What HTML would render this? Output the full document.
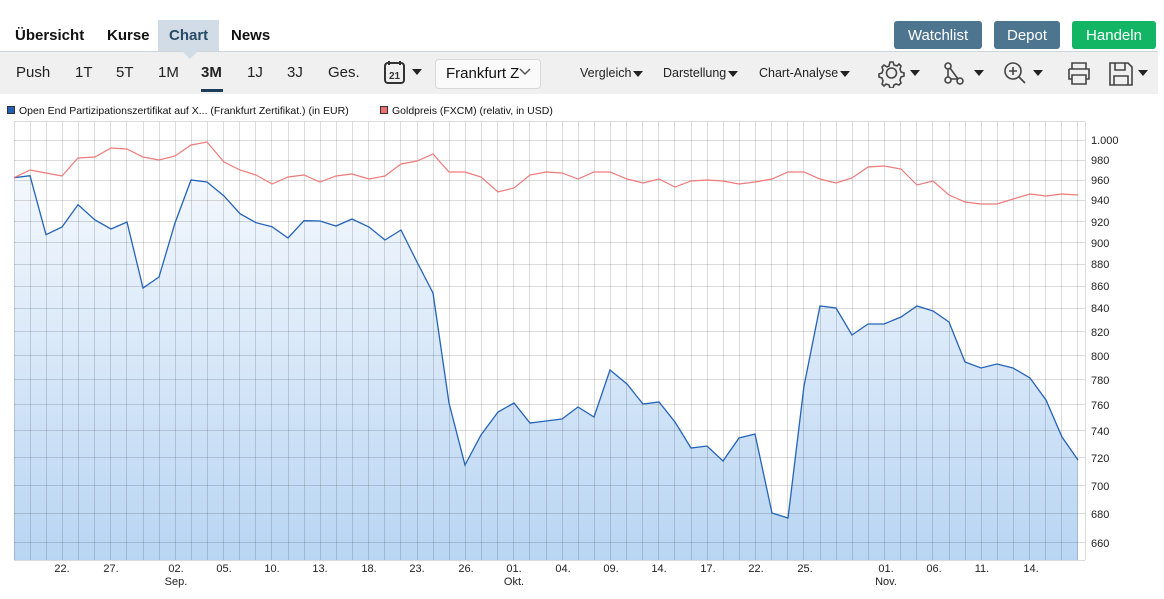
<!DOCTYPE html>
<html><head><meta charset="utf-8"><style>
*{margin:0;padding:0;box-sizing:border-box}
body{width:1164px;height:599px;background:#fff;font-family:"Liberation Sans",sans-serif;position:relative;overflow:hidden;color:#111}
.a{position:absolute;white-space:nowrap}
.tab{font-size:15px;font-weight:bold;top:27px}
.btn{position:absolute;top:21px;height:28px;border-radius:3px;color:#fff;font-size:15px;text-align:center;line-height:29px}
.tb{font-size:15px;top:64px;color:#222}
.sm{font-size:12.5px;top:66px;color:#222}
.tri{display:inline-block;width:0;height:0;border-left:5px solid transparent;border-right:5px solid transparent;border-top:6px solid #222;vertical-align:middle;margin-left:2px}
</style></head><body>
<div class="a" style="left:158px;top:20px;width:61px;height:31px;background:#d2dce6"></div>
<div class="a" style="left:182px;top:51px;width:0;height:0;border-left:8px solid transparent;border-right:8px solid transparent;border-top:8px solid #d2dce6;z-index:2"></div>
<div class="a tab" style="left:15px">Übersicht</div>
<div class="a tab" style="left:107px">Kurse</div>
<div class="a tab" style="left:169px;color:#284b66">Chart</div>
<div class="a tab" style="left:231px">News</div>
<div class="btn" style="left:894px;width:88px;background:#4e7590">Watchlist</div>
<div class="btn" style="left:994px;width:66px;background:#4e7590">Depot</div>
<div class="btn" style="left:1072px;width:84px;background:#11b564">Handeln</div>
<div class="a" style="left:0;top:51px;width:1158px;height:43px;background:#f0f0f0;border-top:1px solid #cdd5dd"></div>
<div class="a tb" style="left:16px">Push</div>
<div class="a tb" style="left:75px">1T</div>
<div class="a tb" style="left:116px">5T</div>
<div class="a tb" style="left:158px">1M</div>
<div class="a tb" style="left:201px;font-weight:bold">3M</div>
<div class="a" style="left:201px;top:89px;width:22px;height:3px;background:#1c3d5a"></div>
<div class="a tb" style="left:247px">1J</div>
<div class="a tb" style="left:287px">3J</div>
<div class="a tb" style="left:328px">Ges.</div>
<svg class="a" style="left:383px;top:60px" width="40" height="26"><rect x="2" y="3" width="19" height="20" rx="3" fill="none" stroke="#333" stroke-width="2"/><line x1="6" y1="1" x2="6" y2="5" stroke="#333" stroke-width="2"/><line x1="17" y1="1" x2="17" y2="5" stroke="#333" stroke-width="2"/><text x="11.5" y="19" font-size="10" font-weight="bold" text-anchor="middle" font-family="Liberation Sans" fill="#333">21</text><path d="M29 9h10l-5 6z" fill="#222"/></svg>
<div class="a" style="left:435px;top:59px;width:106px;height:30px;background:#fafafa;border:1px solid #d8d8d8;border-radius:4px;font-size:15px;line-height:28px;padding-left:10px;overflow:hidden">Frankfurt Z</div>
<svg class="a" style="left:518px;top:67px" width="14" height="10"><path d="M2 2l5 5 5-5" fill="none" stroke="#555" stroke-width="1.5"/></svg>
<div class="a sm" style="left:580px">Vergleich<span class="tri"></span></div>
<div class="a sm" style="left:663px">Darstellung<span class="tri"></span></div>
<div class="a sm" style="left:759px">Chart-Analyse<span class="tri"></span></div>
<svg class="a" style="left:876px;top:58px" width="280" height="30">
<g fill="none" stroke="#444" stroke-width="1.6">
<path d="M15 4l3 0 1 3 3 1 2-2 2 2-1 3 1 3 3 1 0 3-3 1-1 3 1 3-2 2-3-1-2 1-1 3h-3l-1-3-3-1-2 2-2-2 1-3-1-3-3-1v-3l3-1 1-3-1-3 2-2 3 2 2-1z" transform="translate(-1 0)"/>
<circle cx="15.5" cy="15" r="5"/>
<circle cx="72" cy="8" r="3"/><circle cx="72" cy="22" r="3"/><circle cx="84" cy="23" r="3"/><path d="M72 11v8M75 21h6M74 10l8 11"/>
<circle cx="137" cy="13" r="8"/><path d="M143 19l6 6M137 9v8M133 13h8"/>
<path d="M193 11h20v10h-3M196 21h-3V11M196 11V5h14v6M196 17h14v9h-14z"/>
<path d="M234 5h18l4 4v18h-22zM239 5v7h10V5M238 27v-9h14v9"/>
</g>
<path d="M34 12h10l-5 6zM98 12h10l-5 6zM157 12h10l-5 6zM262 12h10l-5 6z" fill="#222"/>
</svg>
<div class="a" style="left:7px;top:106px;width:8px;height:8px;background:#1f5fb4;border:1px solid #333"></div>
<div class="a" style="left:19px;top:105px;font-size:10.5px">Open End Partizipationszertifikat auf X... (Frankfurt Zertifikat.) (in EUR)</div>
<div class="a" style="left:380px;top:106px;width:8px;height:8px;background:#f07070;border:1px solid #333"></div>
<div class="a" style="left:392px;top:105px;font-size:10.5px">Goldpreis (FXCM) (relativ, in USD)</div>
<svg class="a" style="left:0;top:0" width="1164" height="599" font-family="Liberation Sans" font-size="11">
<defs><linearGradient id="g" x1="0" y1="0" x2="0" y2="1"><stop offset="0" stop-color="#f4f8fd"/><stop offset="1" stop-color="#b8d5f3"/></linearGradient></defs>
<path fill="url(#g)" d="M14 177.7L30 175.7L46 234.7L62 227L78 204.7L95 220L111 229L127 222L143 288L159 277L175 223L191 180L207 182L224 196L240 213.7L256 222.7L272 226.7L288 238L304 220.7L320 221L336 226L352 219L369 227L385 240L401 230L417 262L433 293L449 403L465 465L481 435L498 412L514 403L530 423L546 421L562 419L578 407L594 417L610 370L627 384L643 404L659 402L675 422L691 448L707 446L723 461L739 438L755 434L772 513L788 518L804 386L820 306L836 308L852 335L868 324L884 324L901 317L917 306L933 311L949 322L965 362L981 368L997 364L1013 368L1030 378L1046 400L1062 437L1078 460L1078 560L14 560Z"/>
<g stroke="#000" stroke-opacity="0.14" stroke-width="1">
<path d="M14.5 122V560M30.5 122V560M46.5 122V560M62.5 122V560M78.5 122V560M94.5 122V560M110.5 122V560M126.5 122V560M143.5 122V560M159.5 122V560M175.5 122V560M191.5 122V560M207.5 122V560M223.5 122V560M239.5 122V560M255.5 122V560M271.5 122V560M288.5 122V560M304.5 122V560M320.5 122V560M336.5 122V560M352.5 122V560M368.5 122V560M384.5 122V560M400.5 122V560M417.5 122V560M433.5 122V560M449.5 122V560M465.5 122V560M481.5 122V560M497.5 122V560M513.5 122V560M529.5 122V560M546.5 122V560M562.5 122V560M578.5 122V560M594.5 122V560M610.5 122V560M626.5 122V560M642.5 122V560M658.5 122V560M674.5 122V560M691.5 122V560M707.5 122V560M723.5 122V560M739.5 122V560M755.5 122V560M771.5 122V560M787.5 122V560M803.5 122V560M820.5 122V560M836.5 122V560M852.5 122V560M868.5 122V560M884.5 122V560M900.5 122V560M916.5 122V560M932.5 122V560M949.5 122V560M965.5 122V560M981.5 122V560M997.5 122V560M1013.5 122V560M1029.5 122V560M1045.5 122V560M1061.5 122V560M1077.5 122V560"/>
<path d="M14 121.5H1085M14 140.5H1085M14 160.5H1085M14 180.5H1085M14 200.5H1085M14 221.5H1085M14 242.5H1085M14 264.5H1085M14 286.5H1085M14 308.5H1085M14 331.5H1085M14 355.5H1085M14 379.5H1085M14 404.5H1085M14 430.5H1085M14 457.5H1085M14 485.5H1085M14 513.5H1085M14 542.5H1085M14 560.5H1085M1085.5 122V560"/>
</g>
<polyline fill="none" stroke="#2463b8" stroke-width="1.3" points="14,177.7 30,175.7 46,234.7 62,227 78,204.7 95,220 111,229 127,222 143,288 159,277 175,223 191,180 207,182 224,196 240,213.7 256,222.7 272,226.7 288,238 304,220.7 320,221 336,226 352,219 369,227 385,240 401,230 417,262 433,293 449,403 465,465 481,435 498,412 514,403 530,423 546,421 562,419 578,407 594,417 610,370 627,384 643,404 659,402 675,422 691,448 707,446 723,461 739,438 755,434 772,513 788,518 804,386 820,306 836,308 852,335 868,324 884,324 901,317 917,306 933,311 949,322 965,362 981,368 997,364 1013,368 1030,378 1046,400 1062,437 1078,460"/>
<polyline fill="none" stroke="#f07a7a" stroke-width="1.2" points="14,177.7 30,170 46,173 62,176 78,158 95,157 111,148 127,149 143,157 159,160 175,156 191,145 207,142 224,162 240,170 256,175 272,184 288,177 304,175 320,182 336,176 352,174 369,179 385,176 401,164 417,161 433,154 449,172 465,172 481,177 498,192 514,188 530,175 546,172 562,173 578,179 594,172 610,172 627,179 643,183 659,179 675,187 691,181 707,180 723,181 739,184 755,182 772,179 788,172 804,172 820,179 836,183 852,178 868,167 884,166 901,169 917,185 933,181 949,195 965,202 981,204 997,204 1013,199 1030,194 1046,196 1062,194 1078,195"/>
<g fill="#222">
<text x="1091" y="144">1.000</text><text x="1091" y="164">980</text><text x="1091" y="184">960</text><text x="1091" y="204">940</text><text x="1091" y="226">920</text><text x="1091" y="247">900</text><text x="1091" y="268">880</text><text x="1091" y="290">860</text><text x="1091" y="312">840</text><text x="1091" y="336">820</text><text x="1091" y="360">800</text><text x="1091" y="384">780</text><text x="1091" y="409">760</text><text x="1091" y="435">740</text><text x="1091" y="462">720</text><text x="1091" y="490">700</text><text x="1091" y="518">680</text><text x="1091" y="547">660</text>
</g>
<g fill="#222" text-anchor="middle">
<text x="62" y="572">22.</text><text x="111" y="572">27.</text><text x="176" y="572">02.</text><text x="176" y="585">Sep.</text><text x="224" y="572">05.</text><text x="272" y="572">10.</text><text x="320" y="572">13.</text><text x="369" y="572">18.</text><text x="417" y="572">23.</text><text x="466" y="572">26.</text><text x="514" y="572">01.</text><text x="514" y="585">Okt.</text><text x="563" y="572">04.</text><text x="611" y="572">09.</text><text x="659" y="572">14.</text><text x="708" y="572">17.</text><text x="756" y="572">22.</text><text x="805" y="572">25.</text><text x="886" y="572">01.</text><text x="886" y="585">Nov.</text><text x="934" y="572">06.</text><text x="982" y="572">11.</text><text x="1031" y="572">14.</text>
</g>
</svg>
</body></html>
